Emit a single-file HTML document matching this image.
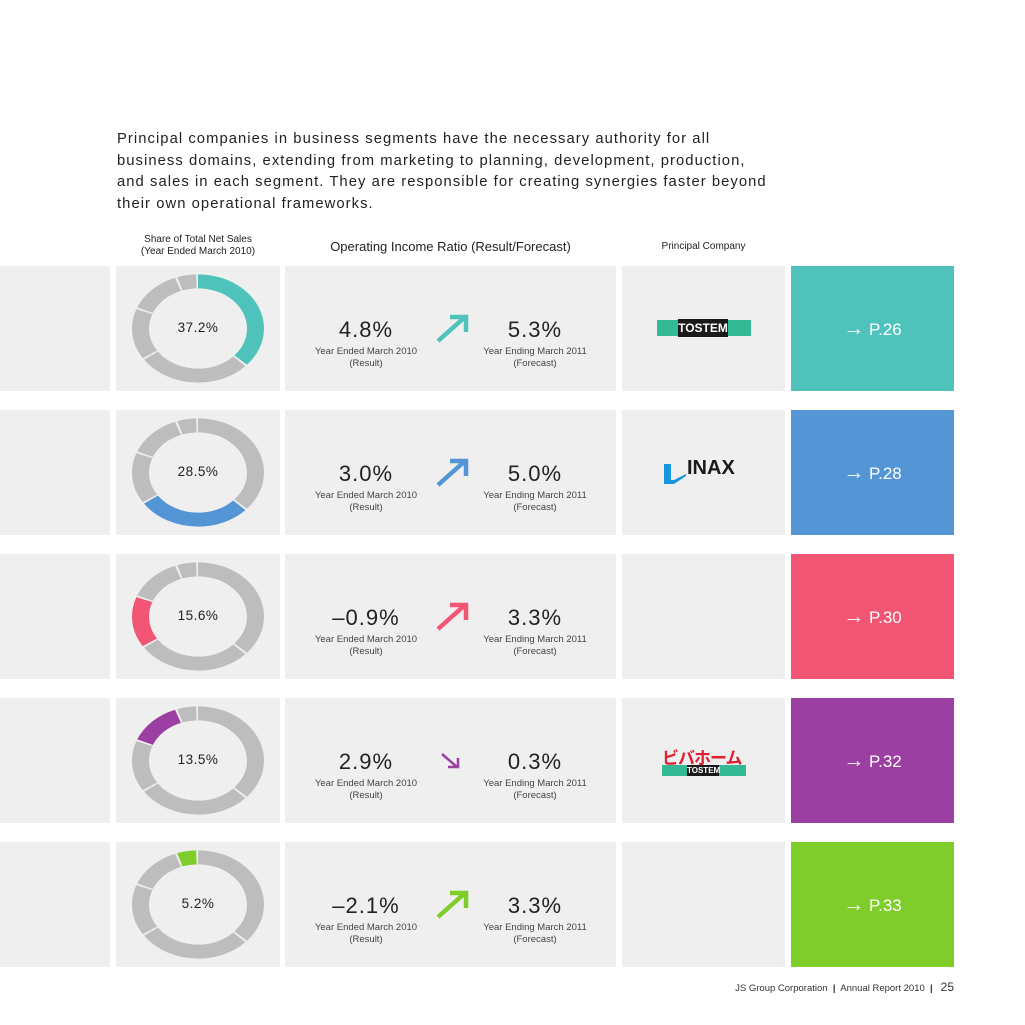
<!DOCTYPE html>
<html><head><meta charset="utf-8"><style>
body{margin:0;width:1025px;height:1025px;background:#fff;position:relative;font-family:"Liberation Sans",sans-serif;color:#222;overflow:hidden}
.a{position:absolute}
.g{background:#efefef}
.p{font-size:14.8px;line-height:21.6px;left:117px;top:129px;white-space:nowrap;color:#222;letter-spacing:1.05px}
.h{font-size:10px;text-align:center;color:#222}
.big{font-size:22px;letter-spacing:1px;text-align:center;width:160px}
.sm{font-size:9.5px;color:#444;text-align:center;width:160px;line-height:12px}
.lnk{color:#fff;font-size:17px;width:163px;text-align:center}
</style></head><body>
<div class="a p">Principal companies in business segments have the necessary authority for all<br>business domains, extending from marketing to planning, development, production,<br>and sales in each segment. They are responsible for creating synergies faster beyond<br>their own operational frameworks.</div>
<div class="a h" style="left:116px;top:234px;width:164px;line-height:12px">Share of Total Net Sales<br>(Year Ended March 2010)</div>
<div class="a" style="left:285px;top:239px;width:331px;text-align:center;font-size:13px">Operating Income Ratio (Result/Forecast)</div>
<div class="a h" style="left:622px;top:241px;width:163px">Principal Company</div>

<div id="rows"></div>
<div class="a" style="right:71px;top:980px;font-size:9.5px;color:#333">JS Group Corporation &nbsp;<b>|</b>&nbsp; Annual Report 2010 &nbsp;<b>|</b>&nbsp;&nbsp; <span style="font-size:12px">25</span></div>

<script>
var rows=[
{c:'#4fc3bb',p:'37.2%',a:'4.8%',b:'5.3%',i:0,l:'P.26',up:1},
{c:'#5495d6',p:'28.5%',a:'3.0%',b:'5.0%',i:1,l:'P.28',up:1},
{c:'#f25573',p:'15.6%',a:'\u20130.9%',b:'3.3%',i:2,l:'P.30',up:1},
{c:'#9c3fa3',p:'13.5%',a:'2.9%',b:'0.3%',i:3,l:'P.32',up:0},
{c:'#7ecd2a',p:'5.2%',a:'\u20132.1%',b:'3.3%',i:4,l:'P.33',up:1}];
var L=[132.4,101.0,54.4,46.8,16.8],O=[0,-134.4,-237.4,-293.7,-342.5];
var h='';
rows.forEach(function(r,k){
var t=266+k*144;
h+='<div class="a g" style="left:0;top:'+t+'px;width:110px;height:125px"></div>';
h+='<div class="a g" style="left:116px;top:'+t+'px;width:164px;height:125px"></div>';
h+='<div class="a g" style="left:285px;top:'+t+'px;width:331px;height:125px"></div>';
h+='<div class="a g" style="left:622px;top:'+t+'px;width:163px;height:125px"></div>';
h+='<div class="a" style="left:791px;top:'+t+'px;width:163px;height:125px;background:'+r.c+'"></div>';
var s='<svg class="a" style="left:116px;top:'+t+'px" width="164" height="125"><g transform="translate(82 62.5) scale(1 0.82) rotate(-90)">';
for(var j=0;j<5;j++)s+='<circle cx="0" cy="0" r="57.5" fill="none" stroke-width="17" stroke="'+(j==r.i?r.c:'#bdbdbd')+'" stroke-dasharray="'+L[j]+' 400" stroke-dashoffset="'+O[j]+'"/>';
s+='</g></svg>';h+=s;
h+='<div class="a" style="left:116px;top:'+(t+54)+'px;width:164px;text-align:center;font-size:13.5px;letter-spacing:0.5px">'+r.p+'</div>';
h+='<div class="a big" style="left:286px;top:'+(t+51)+'px">'+r.a+'</div>';
h+='<div class="a big" style="left:455px;top:'+(t+51)+'px">'+r.b+'</div>';
h+='<div class="a sm" style="left:286px;top:'+(t+80)+'px">Year Ended March 2010<br>(Result)</div>';
h+='<div class="a sm" style="left:455px;top:'+(t+80)+'px">Year Ending March 2011<br>(Forecast)</div>';
if(r.up)h+='<svg class="a" style="left:430px;top:'+(t+44)+'px" width="44" height="36"><path d="M8 31 L35 7 M20 7 H36 V22" fill="none" stroke="'+r.c+'" stroke-width="4.5"/></svg>';
else h+='<svg class="a" style="left:438px;top:'+(t+52)+'px" width="26" height="22"><path d="M4 4 L19 17 M10 17 H20 V8" fill="none" stroke="'+r.c+'" stroke-width="2.5"/></svg>';
h+='<div class="a lnk" style="left:791px;top:'+(t+54)+'px"><span style="font-size:21px;line-height:17px">&#x2192;</span> '+r.l+'</div>';
});
document.getElementById('rows').innerHTML=h;
</script>
<div class="a" style="left:657px;top:320px;width:94px;height:16px;background:#34b995"></div>
<div class="a" style="left:678px;top:319px;width:50px;height:18px;background:#1a1a1a;color:#fff;font-weight:bold;font-size:12px;text-align:center;line-height:18px">TOSTEM</div>
<svg class="a" style="left:664px;top:462px" width="22" height="22"><polygon points="0,2 22,2 22,14 10,22 0,22" fill="#1896dc"/><polygon points="7,2 22,2 22,12 10,18 7,18" fill="#efefef"/></svg>
<div class="a" style="left:687px;top:457px;font-weight:bold;font-size:20px;color:#1a1a1a">INAX</div>
<div class="a" style="left:662px;top:744px;font-weight:bold;font-size:17px;color:#e02030;letter-spacing:-1px;font-family:'Liberation Sans','Noto Sans CJK JP',sans-serif">ビバホーム</div>
<div class="a" style="left:662px;top:765px;width:84px;height:11px;background:#34b995"></div>
<div class="a" style="left:687px;top:765px;width:32px;height:11px;background:#1a1a1a;color:#fff;font-weight:bold;font-size:8px;text-align:center;line-height:11px">TOSTEM</div>
</body></html>
